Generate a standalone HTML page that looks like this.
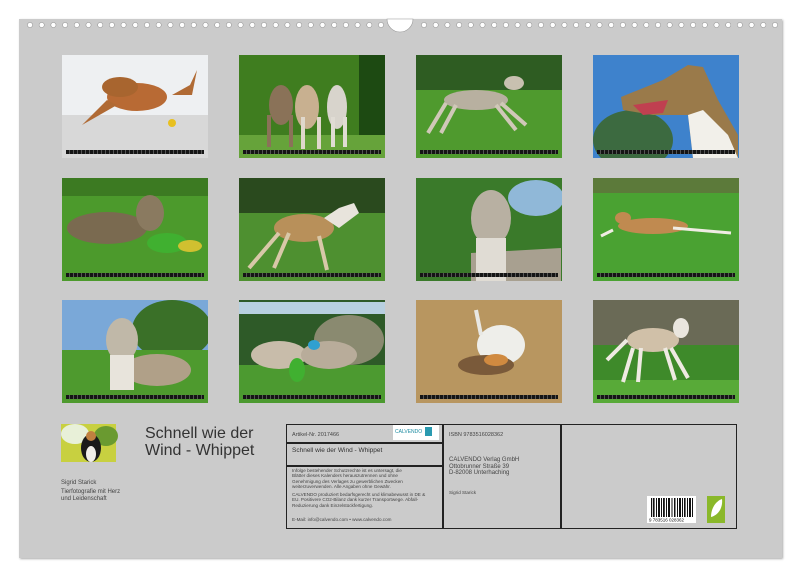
<!DOCTYPE html>
<html><head><meta charset="utf-8"><style>
*{margin:0;padding:0;box-sizing:border-box}
body{width:800px;height:577px;background:#fff;position:relative;overflow:hidden;font-family:"Liberation Sans",Arial,sans-serif;color:#333}
#panel{position:absolute;left:19px;top:19px;width:763px;height:539px;background:#cbcbcb;box-shadow:1px 1px 2px #aaa}
.t{position:absolute;white-space:nowrap}
.box{position:absolute;border:1.5px solid #222}
</style></head><body>
<div id="panel"></div>
<svg width="800" height="577" style="position:absolute;left:0;top:0">
<defs>
<pattern id="strip" width="4" height="4" patternUnits="userSpaceOnUse"><rect width="4" height="4" fill="#151515"/><rect x="3" width="1" height="4" fill="#555"/></pattern>
<clipPath id="c"><rect width="146" height="103"/></clipPath>
</defs>
<!-- holes -->
<g fill="#fff" stroke="#999" stroke-width="0.6">
<circle cx="30" cy="25" r="2.6"/><circle cx="41.7" cy="25" r="2.6"/><circle cx="53.4" cy="25" r="2.6"/><circle cx="65.1" cy="25" r="2.6"/><circle cx="76.8" cy="25" r="2.6"/><circle cx="88.5" cy="25" r="2.6"/><circle cx="100.2" cy="25" r="2.6"/><circle cx="111.9" cy="25" r="2.6"/><circle cx="123.6" cy="25" r="2.6"/><circle cx="135.3" cy="25" r="2.6"/><circle cx="147" cy="25" r="2.6"/><circle cx="158.7" cy="25" r="2.6"/><circle cx="170.4" cy="25" r="2.6"/><circle cx="182.1" cy="25" r="2.6"/><circle cx="193.8" cy="25" r="2.6"/><circle cx="205.5" cy="25" r="2.6"/><circle cx="217.2" cy="25" r="2.6"/><circle cx="228.9" cy="25" r="2.6"/><circle cx="240.6" cy="25" r="2.6"/><circle cx="252.3" cy="25" r="2.6"/><circle cx="264" cy="25" r="2.6"/><circle cx="275.7" cy="25" r="2.6"/><circle cx="287.4" cy="25" r="2.6"/><circle cx="299.1" cy="25" r="2.6"/><circle cx="310.8" cy="25" r="2.6"/><circle cx="322.5" cy="25" r="2.6"/><circle cx="334.2" cy="25" r="2.6"/><circle cx="345.9" cy="25" r="2.6"/><circle cx="357.6" cy="25" r="2.6"/><circle cx="369.3" cy="25" r="2.6"/><circle cx="381" cy="25" r="2.6"/>
<circle cx="424" cy="25" r="2.6"/><circle cx="435.7" cy="25" r="2.6"/><circle cx="447.4" cy="25" r="2.6"/><circle cx="459.1" cy="25" r="2.6"/><circle cx="470.8" cy="25" r="2.6"/><circle cx="482.5" cy="25" r="2.6"/><circle cx="494.2" cy="25" r="2.6"/><circle cx="505.9" cy="25" r="2.6"/><circle cx="517.6" cy="25" r="2.6"/><circle cx="529.3" cy="25" r="2.6"/><circle cx="541" cy="25" r="2.6"/><circle cx="552.7" cy="25" r="2.6"/><circle cx="564.4" cy="25" r="2.6"/><circle cx="576.1" cy="25" r="2.6"/><circle cx="587.8" cy="25" r="2.6"/><circle cx="599.5" cy="25" r="2.6"/><circle cx="611.2" cy="25" r="2.6"/><circle cx="622.9" cy="25" r="2.6"/><circle cx="634.6" cy="25" r="2.6"/><circle cx="646.3" cy="25" r="2.6"/><circle cx="658" cy="25" r="2.6"/><circle cx="669.7" cy="25" r="2.6"/><circle cx="681.4" cy="25" r="2.6"/><circle cx="693.1" cy="25" r="2.6"/><circle cx="704.8" cy="25" r="2.6"/><circle cx="716.5" cy="25" r="2.6"/><circle cx="728.2" cy="25" r="2.6"/><circle cx="739.9" cy="25" r="2.6"/><circle cx="751.6" cy="25" r="2.6"/><circle cx="763.3" cy="25" r="2.6"/><circle cx="775" cy="25" r="2.6"/>
</g>
<path d="M387 19 A13 13 0 0 0 413 19 Z" fill="#fff" stroke="#999" stroke-width="0.6"/>

<!-- Row 1 -->
<g transform="translate(62,55)" clip-path="url(#c)">
<rect width="146" height="103" fill="#eef0f2"/><rect y="60" width="146" height="43" fill="#d8d8d8"/>
<ellipse cx="75" cy="42" rx="30" ry="14" fill="#b86a34"/><ellipse cx="58" cy="32" rx="18" ry="10" fill="#a8652f"/>
<path d="M20 70 L45 45 L55 50 Z M110 40 L130 40 L135 15 L128 30 Z" fill="#b06a34"/>
<ellipse cx="110" cy="68" rx="4" ry="4" fill="#e8c020"/>
<rect x="4" y="95" width="138" height="4" fill="url(#strip)"/></g>
<g transform="translate(239,55)" clip-path="url(#c)">
<rect width="146" height="103" fill="#3f7d1f"/><rect y="80" width="146" height="23" fill="#66a33a"/>
<rect x="120" width="26" height="80" fill="#1d4a12"/>
<ellipse cx="42" cy="50" rx="12" ry="20" fill="#8a7258"/><ellipse cx="68" cy="52" rx="12" ry="22" fill="#c8b090"/><ellipse cx="98" cy="52" rx="10" ry="22" fill="#d8d4cc"/>
<rect x="28" y="60" width="4" height="32" fill="#8a7258"/><rect x="50" y="60" width="4" height="32" fill="#8a7258"/><rect x="62" y="62" width="4" height="32" fill="#e0d8cc"/><rect x="78" y="62" width="4" height="32" fill="#e0d8cc"/><rect x="92" y="62" width="4" height="30" fill="#e0dcd4"/><rect x="104" y="62" width="4" height="30" fill="#e0dcd4"/>
<rect x="4" y="95" width="138" height="4" fill="url(#strip)"/></g>
<g transform="translate(416,55)" clip-path="url(#c)">
<rect width="146" height="103" fill="#2e5c22"/><rect y="35" width="146" height="68" fill="#4f9a2e"/>
<ellipse cx="60" cy="45" rx="32" ry="10" fill="#b8b0a0"/><ellipse cx="98" cy="28" rx="10" ry="7" fill="#c8c0b0"/>
<path d="M30 48 L12 78 M40 50 L25 78 M80 50 L100 75 M85 48 L110 70" stroke="#d0c8b8" stroke-width="4"/>
<rect x="4" y="95" width="138" height="4" fill="url(#strip)"/></g>
<g transform="translate(593,55)" clip-path="url(#c)">
<rect width="146" height="103" fill="#3e82cc"/><ellipse cx="40" cy="85" rx="40" ry="30" fill="#3c6a40"/>
<path d="M28 42 L70 25 L95 10 L110 12 L125 45 L145 80 L145 103 L100 103 L95 60 L60 60 L30 55 Z" fill="#9a7a4a"/>
<path d="M95 60 L110 55 L135 80 L145 103 L100 103 Z" fill="#f2f0ea"/>
<path d="M40 50 L75 45 L70 58 L50 60 Z" fill="#c04050"/>
<rect x="4" y="95" width="138" height="4" fill="url(#strip)"/></g>

<!-- Row 2 -->
<g transform="translate(62,178)" clip-path="url(#c)">
<rect width="146" height="103" fill="#3c7a22"/><rect y="18" width="146" height="85" fill="#4c9a2c"/>
<ellipse cx="45" cy="50" rx="40" ry="16" fill="#7a6a50"/><ellipse cx="88" cy="35" rx="14" ry="18" fill="#8a7a60"/>
<ellipse cx="105" cy="65" rx="20" ry="10" fill="#40b030"/><ellipse cx="128" cy="68" rx="12" ry="6" fill="#d0c030"/>
<rect x="4" y="95" width="138" height="4" fill="url(#strip)"/></g>
<g transform="translate(239,178)" clip-path="url(#c)">
<rect width="146" height="103" fill="#2a4a1e"/><rect y="35" width="146" height="68" fill="#4e9030"/>
<ellipse cx="65" cy="50" rx="30" ry="14" fill="#b8905a"/><path d="M85 40 L100 30 L115 25 L120 35 L100 50 Z" fill="#e8e4dc"/>
<path d="M40 55 L10 90 M50 55 L35 90 M80 58 L88 92" stroke="#d8c8a8" stroke-width="4"/>
<rect x="4" y="95" width="138" height="4" fill="url(#strip)"/></g>
<g transform="translate(416,178)" clip-path="url(#c)">
<rect width="146" height="103" fill="#3a7a2a"/><ellipse cx="120" cy="20" rx="28" ry="18" fill="#90b8d8"/>
<ellipse cx="75" cy="40" rx="20" ry="28" fill="#b8b0a2"/><path d="M55 75 L145 70 L145 103 L55 103 Z" fill="#a8a090"/><rect x="60" y="60" width="30" height="43" fill="#e0dcd4"/>
<rect x="4" y="95" width="138" height="4" fill="url(#strip)"/></g>
<g transform="translate(593,178)" clip-path="url(#c)">
<rect width="146" height="103" fill="#5c7a3a"/><rect y="15" width="146" height="88" fill="#4aa232"/>
<ellipse cx="60" cy="48" rx="35" ry="8" fill="#c08a50"/><ellipse cx="30" cy="40" rx="8" ry="6" fill="#c08a50"/>
<path d="M80 50 L138 55 M20 52 L8 58" stroke="#f0ece4" stroke-width="3"/>
<rect x="4" y="95" width="138" height="4" fill="url(#strip)"/></g>

<!-- Row 3 -->
<g transform="translate(62,300)" clip-path="url(#c)">
<rect width="146" height="103" fill="#7aa8d8"/><ellipse cx="110" cy="30" rx="40" ry="30" fill="#3a7028"/><rect y="50" width="146" height="53" fill="#4e9a2e"/>
<ellipse cx="60" cy="40" rx="16" ry="22" fill="#c0b8a8"/><ellipse cx="95" cy="70" rx="34" ry="16" fill="#b0a088"/><rect x="48" y="55" width="24" height="35" fill="#e8e4dc"/>
<rect x="4" y="95" width="138" height="4" fill="url(#strip)"/></g>
<g transform="translate(239,300)" clip-path="url(#c)">
<rect width="146" height="103" fill="#2e5a28"/><rect y="2" width="146" height="12" fill="#b8d0e0"/><ellipse cx="110" cy="40" rx="35" ry="25" fill="#8a8a70"/><rect y="65" width="146" height="38" fill="#4c9a30"/>
<ellipse cx="40" cy="55" rx="28" ry="14" fill="#c8bcaa"/><ellipse cx="90" cy="55" rx="28" ry="14" fill="#b8ac9a"/>
<ellipse cx="58" cy="70" rx="8" ry="12" fill="#40b030"/><ellipse cx="75" cy="45" rx="6" ry="5" fill="#30a0d0"/>
<rect x="4" y="95" width="138" height="4" fill="url(#strip)"/></g>
<g transform="translate(416,300)" clip-path="url(#c)">
<rect width="146" height="103" fill="#b89660"/>
<ellipse cx="85" cy="45" rx="24" ry="20" fill="#eeeeea"/><path d="M60 10 L65 35" stroke="#e8e8e4" stroke-width="4"/>
<ellipse cx="70" cy="65" rx="28" ry="10" fill="#7a5a3a"/><ellipse cx="80" cy="60" rx="12" ry="6" fill="#d08a40"/>
<rect x="4" y="95" width="138" height="4" fill="url(#strip)"/></g>
<g transform="translate(593,300)" clip-path="url(#c)">
<rect width="146" height="103" fill="#6a6a56"/><rect y="45" width="146" height="58" fill="#3e8a2a"/><rect y="80" width="146" height="23" fill="#58aa38"/>
<ellipse cx="60" cy="40" rx="26" ry="12" fill="#d0c0a8"/><ellipse cx="88" cy="28" rx="8" ry="10" fill="#eae6de"/>
<path d="M40 48 L30 82 M48 48 L45 82 M72 48 L82 80 M78 48 L95 78 M34 40 L14 60" stroke="#eeeae2" stroke-width="4"/>
<rect x="4" y="95" width="138" height="4" fill="url(#strip)"/></g>

<!-- small photo -->
<g transform="translate(61,424)">
<rect width="55" height="38" fill="#c8d040"/><ellipse cx="14" cy="10" rx="14" ry="10" fill="#e8f0d8"/><ellipse cx="45" cy="12" rx="12" ry="10" fill="#6a9a30"/>
<ellipse cx="30" cy="24" rx="10" ry="14" fill="#1a1a1a"/><ellipse cx="30" cy="30" rx="5" ry="8" fill="#f0eee8"/><ellipse cx="30" cy="12" rx="5" ry="5" fill="#c08040"/>
</g>
<!-- barcode -->
<rect x="647" y="496" width="49" height="27" fill="#fff"/>
<g fill="#111"><rect x="651" y="498" width="1.2" height="19"/><rect x="653" y="498" width="1.6" height="19"/><rect x="656" y="498" width="1" height="19"/><rect x="658" y="498" width="2" height="19"/><rect x="661" y="498" width="1" height="19"/><rect x="663" y="498" width="1.8" height="19"/><rect x="666" y="498" width="1" height="19"/><rect x="668" y="498" width="2" height="19"/><rect x="671.5" y="498" width="1" height="19"/><rect x="674" y="498" width="1.5" height="19"/><rect x="677" y="498" width="1" height="19"/><rect x="679" y="498" width="2" height="19"/><rect x="682" y="498" width="1" height="19"/><rect x="684" y="498" width="1.6" height="19"/><rect x="687" y="498" width="1" height="19"/><rect x="689" y="498" width="2" height="19"/><rect x="692" y="498" width="1" height="19"/></g>
<text x="649" y="521.5" font-size="4.5" font-family="Liberation Sans" fill="#111">9 783516 028362</text>
<rect x="707" y="496" width="18" height="27" fill="#8ab82a"/>
<path d="M711 517 C711 508 716 501 722 499 C723 507 719 515 711 517 Z" fill="#fff"/>
</svg>

<div class="t" style="left:145px;top:425px;font-size:16px;line-height:17px;color:#333">Schnell wie der<br>Wind - Whippet</div>
<div class="t" style="left:61px;top:480px;font-size:6px;color:#444">Sigrid Starick</div>
<div class="t" style="left:61px;top:489px;font-size:6px;line-height:7px;color:#444">Tierfotografie mit Herz<br>und Leidenschaft</div>

<div class="box" style="left:286px;top:424px;width:451px;height:105px"></div>
<div style="position:absolute;left:442px;top:424px;width:1.5px;height:105px;background:#222"></div>
<div style="position:absolute;left:560px;top:424px;width:1.5px;height:105px;background:#222"></div>
<div style="position:absolute;left:286px;top:442px;width:157px;height:1.5px;background:#222"></div>
<div style="position:absolute;left:286px;top:465px;width:157px;height:1.5px;background:#222"></div>
<div style="position:absolute;left:393px;top:425px;width:46px;height:15px;background:#fff;font-size:5px;color:#1a8aa0;padding:2px 0 0 2px">CALVENDO<span style="display:inline-block;width:7px;height:9px;background:#2a9ab0;margin-left:3px;vertical-align:middle"></span></div>
<div class="t" style="left:292px;top:432px;font-size:5.5px;color:#444">Artikel-Nr. 2017466</div>
<div class="t" style="left:292px;top:447px;font-size:6.5px;color:#333">Schnell wie der Wind - Whippet</div>
<div class="t" style="left:292px;top:468px;font-size:4.6px;line-height:5.3px;color:#444">Infolge bestehender Schutzrechte ist es untersagt, die<br>Blätter dieses Kalenders herauszutrennen und ohne<br>Genehmigung des Verlages zu gewerblichen Zwecken<br>weiterzuverwenden. Alle Angaben ohne Gewähr.</div>
<div class="t" style="left:292px;top:492px;font-size:4.6px;line-height:5.3px;color:#444">CALVENDO produziert bedarfsgerecht und klimabewusst in DE &amp;<br>EU. Positivere CO2-Bilanz dank kurzer Transportwege. Abfall-<br>Reduzierung dank Einzelstückfertigung.</div>
<div class="t" style="left:292px;top:517px;font-size:4.6px;color:#444">E-Mail: info@calvendo.com • www.calvendo.com</div>
<div class="t" style="left:449px;top:432px;font-size:5.5px;color:#444">ISBN 9783516028362</div>
<div class="t" style="left:449px;top:457px;font-size:6px;line-height:6.5px;color:#444">CALVENDO Verlag GmbH<br>Ottobrunner Straße 39<br>D-82008 Unterhaching</div>
<div class="t" style="left:449px;top:490px;font-size:4.6px;color:#444">Sigrid Starick</div>
</body></html>
